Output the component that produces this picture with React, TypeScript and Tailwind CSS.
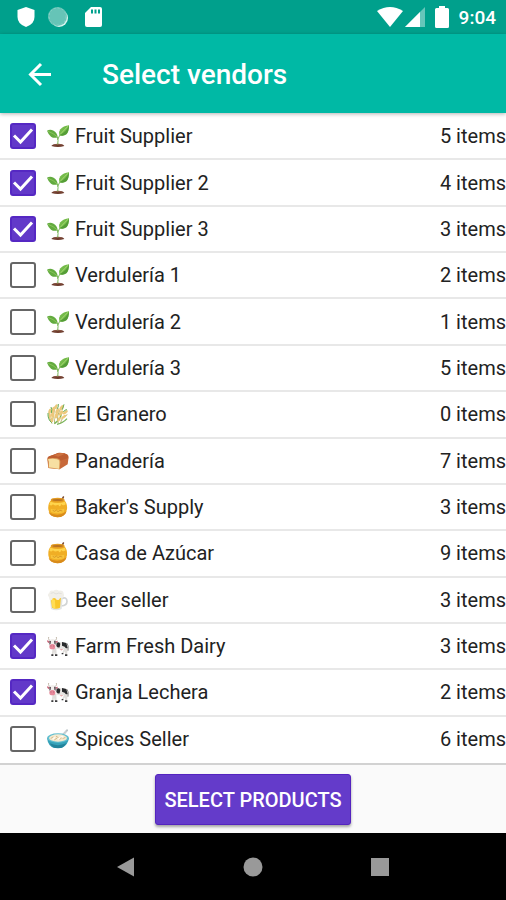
import React, { useState } from 'react';

type Kind = 'seedling' | 'grain' | 'bread' | 'honey' | 'beer' | 'cow' | 'bowl';

interface Vendor {
  id: number;
  name: string;
  kind: Kind;
  items: number;
}

const vendors: Vendor[] = [
  { id: 1, name: 'Fruit Supplier', kind: 'seedling', items: 5 },
  { id: 2, name: 'Fruit Supplier 2', kind: 'seedling', items: 4 },
  { id: 3, name: 'Fruit Supplier 3', kind: 'seedling', items: 3 },
  { id: 4, name: 'Verdulería 1', kind: 'seedling', items: 2 },
  { id: 5, name: 'Verdulería 2', kind: 'seedling', items: 1 },
  { id: 6, name: 'Verdulería 3', kind: 'seedling', items: 5 },
  { id: 7, name: 'El Granero', kind: 'grain', items: 0 },
  { id: 8, name: 'Panadería', kind: 'bread', items: 7 },
  { id: 9, name: "Baker's Supply", kind: 'honey', items: 3 },
  { id: 10, name: 'Casa de Azúcar', kind: 'honey', items: 9 },
  { id: 11, name: 'Beer seller', kind: 'beer', items: 3 },
  { id: 12, name: 'Farm Fresh Dairy', kind: 'cow', items: 3 },
  { id: 13, name: 'Granja Lechera', kind: 'cow', items: 2 },
  { id: 14, name: 'Spices Seller', kind: 'bowl', items: 6 },
];

const drawings: Record<Kind, React.ReactNode> = {
  seedling: (
    <>
      <path d="M13 63 Q18 56 33 56 Q48 56 52 63 Q33 69 13 63Z" fill="#6d3b2c" />
      <path d="M21 60 Q33 56 45 60" stroke="#9a6552" strokeWidth="2" fill="none" />
      <path d="M32 58 Q35 45 31 36 M32 44 Q35 32 46 24" stroke="#7bb85a" strokeWidth="3" fill="none" />
      <path d="M0 17 Q9 12 20 17 Q31 23 32 37 Q21 41 12 35 Q5 30 0 17Z" fill="#62ab3f" />
      <path d="M3 19 Q19 24 31 36" stroke="#9bcf66" strokeWidth="2" fill="none" />
      <path d="M66 1 Q66 20 58 28 Q49 35 37 31 Q33 22 40 13 Q49 3 66 1Z" fill="#74bb4a" />
      <path d="M63 4 Q52 14 39 29" stroke="#a6d871" strokeWidth="3" fill="none" />
      <path d="M37 31 Q49 35 58 28 Q66 20 66 1 Q60 20 37 31Z" fill="#559d37" />
    </>
  ),
  grain: (
    <>
      <path d="M15 62 Q4 45 8 24 M24 63 Q15 38 24 10 M34 62 Q26 40 43 14 M41 62 Q42 44 61 35" stroke="#b9b56d" strokeWidth="3" fill="none" />
      <path d="M22 62 Q40 50 44 30 M30 64 Q48 60 60 47" stroke="#79b45a" strokeWidth="4" fill="none" />
      <g fill="#ecc87c">
        <ellipse cx="8" cy="25" rx="4" ry="9" transform="rotate(15 8 25)" />
        <ellipse cx="8" cy="39" rx="4" ry="8" />
        <ellipse cx="19" cy="20" rx="5" ry="9" transform="rotate(15 19 20)" />
        <ellipse cx="17" cy="35" rx="5" ry="9" />
        <ellipse cx="27" cy="11" rx="4" ry="8" transform="rotate(25 27 11)" />
        <ellipse cx="31" cy="24" rx="5" ry="9" transform="rotate(25 31 24)" />
        <ellipse cx="28" cy="38" rx="5" ry="9" transform="rotate(15 28 38)" />
        <ellipse cx="44" cy="14" rx="5" ry="9" transform="rotate(35 44 14)" />
        <ellipse cx="42" cy="30" rx="5" ry="9" transform="rotate(35 42 30)" />
        <ellipse cx="55" cy="28" rx="4" ry="9" transform="rotate(55 55 28)" />
        <ellipse cx="50" cy="42" rx="4" ry="9" transform="rotate(55 50 42)" />
        <ellipse cx="15" cy="50" rx="4" ry="8" />
        <ellipse cx="36" cy="49" rx="4" ry="8" transform="rotate(30 36 49)" />
      </g>
      <path d="M34 3 Q35 13 30 18 M51 4 L46 20 M60 20 Q54 19 49 27 M3 30 Q2 50 14 59 M12 12 Q16 19 13 30" stroke="#68ad56" strokeWidth="3" fill="none" />
    </>
  ),
  bread: (
    <>
      <path d="M1 28 Q0 19 12 17 L33 9 Q51 8 60 13 Q67 17 64 28 L62 43 L38 58 L4 54Z" fill="#c8693a" />
      <path d="M2 25 Q5 17 18 15 L35 8 Q53 7 61 14 Q66 20 61 25 L39 32 Q25 24 2 25Z" fill="#bd5d30" />
      <path d="M20 16 L38 9 Q48 8 54 11 L34 20Z" fill="#cf7340" />
      <path d="M1 28 Q10 22 29 25 Q41 27 40 36 L38 58 L4 54 L4 35 Q1 33 1 28Z" fill="#dda05d" />
      <path d="M3 28 Q16 24 30 28 Q38 30 37 36 L36 56 L6 52 L6 34Z" fill="#f7dfa2" />
    </>
  ),
  honey: (
    <>
      <path d="M44 13 L49 3" stroke="#76442c" strokeWidth="5" strokeLinecap="round" />
      <path d="M13 12 Q2 22 4 40 Q6 61 31 64 Q56 63 60 40 Q62 22 51 12Z" fill="#f0ae25" />
      <path d="M5 48 Q31 66 59 46 Q53 64 31 64 Q9 63 5 48Z" fill="#d98b1b" />
      <ellipse cx="32" cy="12" rx="21" ry="7" fill="#e49c22" />
      <ellipse cx="32" cy="12" rx="16" ry="3" fill="#b97322" />
      <path d="M10 17 Q32 25 54 17 L56 25 Q48 31 43 24 Q39 36 34 26 Q22 31 18 25 Q14 31 7 26Z" fill="#ffd44c" />
      <path d="M11 38 Q31 44 52 38 L51 49 Q31 55 12 48Z" fill="#f8c33a" />
      <path d="M17 43 L23 46 L28 42 L33 47 L39 43 L46 45" stroke="#c98621" strokeWidth="2" fill="none" />
    </>
  ),
  beer: (
    <>
      <path d="M43 29 Q60 22 60 37 Q60 50 43 51" stroke="#d2d5d6" strokeWidth="5" fill="none" />
      <path d="M7 16 L48 16 L44 60 Q27 68 12 60Z" fill="#e2e5e4" />
      <path d="M11 25 L42 25 L39 56 Q27 62 15 56Z" fill="#f9c72c" />
      <path d="M13 28 L24 34 L25 58 Q20 59 16 55Z" fill="#ffdd55" />
      <path d="M6 24 Q-1 18 7 11 Q8 2 19 5 Q28 -1 36 5 Q49 3 50 14 Q54 24 45 27 Q39 25 36 32 Q28 35 25 28 Q17 25 14 33 Q7 36 7 28Z" fill="#f1efe9" />
      <path d="M11 13 Q20 8 27 15 Q35 10 44 14" stroke="#dad8d3" strokeWidth="2" fill="none" />
    </>
  ),
  cow: (
    <>
      <path d="M27 23 Q43 18 60 25 L63 40 Q62 46 55 43 L40 43 L29 42Z" fill="#e8e5e2" />
      <path d="M17 37 L28 39 L29 62 L24 62 L21 50 L19 62 L14 62Z M52 40 L62 39 L60 62 L55 62 L54 49 L48 57 L44 57Z" fill="#e1dedb" />
      <path d="M29 23 Q36 20 40 26 L38 37 Q32 39 28 33Z M45 21 L58 24 L62 39 Q57 42 53 35 L45 32Z" fill="#292a2c" />
      <path d="M60 25 Q66 32 63 47" stroke="#55514f" strokeWidth="2" fill="none" />
      <path d="M13 58 H19 V63 H13Z M24 58 H31 V63 H24Z M44 54 H49 V58 H44Z M54 58 H61 V63 H54Z" fill="#39393b" />
      <path d="M7 16 Q3 10 5 6 M26 16 Q30 11 28 6" stroke="#c2b8aa" strokeWidth="3" fill="none" />
      <path d="M0 16 L9 19 L8 25 Q0 24 0 16Z M33 17 L24 19 L25 25 Q33 24 33 17Z" fill="#c96b7d" />
      <path d="M8 15 Q16 9 25 15 L27 29 L21 42 H11 L5 29Z" fill="#f1eeec" />
      <path d="M7 17 L12 18 L11 26 L7 29Z M21 17 L26 17 L26 29 L22 26Z" fill="#615158" />
      <ellipse cx="16" cy="35" rx="9" ry="8" fill="#e8899b" />
      <path d="M11 33 H13 M19 33 H21" stroke="#87434e" strokeWidth="2" />
      <path d="M38 43 Q44 50 48 42Z" fill="#e7a1a5" />
    </>
  ),
  bowl: (
    <>
      <path d="M43 26 L60 7" stroke="#b4bdc1" strokeWidth="6" strokeLinecap="round" />
      <path d="M45 24 L59 8" stroke="#edf0f0" strokeWidth="2" />
      <path d="M0 30 Q3 54 21 60 L44 60 Q62 53 66 30Z" fill="#36a3ba" />
      <path d="M8 46 Q32 57 58 46 Q51 61 33 61 Q15 61 8 46Z" fill="#23839b" />
      <ellipse cx="33" cy="30" rx="33" ry="14" fill="#63bfd0" />
      <ellipse cx="33" cy="30" rx="27" ry="11" fill="#f4ead0" />
      <path d="M12 31 L18 27 M23 35 L29 31 M28 25 L34 29 M39 34 L44 29 M48 31 L54 29" stroke="#d5b98b" strokeWidth="3" strokeLinecap="round" />
      <path d="M18 33 L23 29 M34 33 L38 29 M42 25 L48 27" stroke="#fffaf0" strokeWidth="4" strokeLinecap="round" />
    </>
  ),
};

const StatusBar = () => (
  <div className="flex h-[34px] items-center justify-between bg-[#00a08c] pl-4 pr-2.5 text-white">
    <div className="flex items-center gap-3">
      <svg className="h-5 w-5" viewBox="0 0 20 20" fill="currentColor">
        <path d="M10 0 L18.500 3 V10 Q18.500 17 10 20 Q1.500 17 1.500 10 V3Z" />
      </svg>
      <svg className="h-5 w-5" viewBox="0 0 20 20">
        <circle cx="11" cy="11" r="9" fill="#d9f4ef" />
        <circle cx="9.500" cy="9.500" r="9.500" fill="#66c4b7" />
        <circle cx="9.500" cy="9.500" r="8.500" fill="none" stroke="#8bd2c8" strokeDasharray="2 2" />
      </svg>
      <svg className="ml-1 h-5 w-5" viewBox="0 0 20 20">
        <path d="M7 0 H16 Q18 0 18 2 V18 Q18 20 16 20 H3 Q1 20 1 18 V6Z" fill="#fff" />
        <path d="M7 2.500 h2 v4 h-2z M10.500 2.500 h2 v4 h-2z M14 2.500 h2 v4 h-2z" fill="#00a08c" />
      </svg>
    </div>
    <div className="flex items-center">
      <svg className="h-5 w-[26px]" viewBox="0 0 26 20" fill="currentColor">
        <path d="M0 4 Q13 -4 26 4 L13 20Z" />
      </svg>
      <svg className="ml-0.5 h-5 w-5" viewBox="0 0 20 20">
        <path d="M20 0 V20 H0Z" fill="#66c6ba" />
        <path d="M15 5 V20 H0Z" fill="#fff" />
      </svg>
      <svg className="ml-2.5 h-[22px] w-3.5" viewBox="0 0 14 22" fill="currentColor">
        <path d="M4 0 H10 V2 H12.500 Q14 2 14 3.500 V20.500 Q14 22 12.500 22 H1.500 Q0 22 0 20.500 V3.500 Q0 2 1.500 2 H4Z" />
      </svg>
      <span className="ml-2.5 pt-0.5 text-[19px] font-medium">9:04</span>
    </div>
  </div>
);

const VendorRow = ({ vendor, checked, onToggle }: { vendor: Vendor; checked: boolean; onToggle: () => void }) => (
  <li className="flex flex-1 border-b-2 border-[#e8e8e8] last:border-transparent">
    <label className="flex min-h-10 flex-1 items-center">
      <span className="ml-2.5 grid shrink-0 place-items-center">
        <input
          type="checkbox"
          checked={checked}
          onChange={onToggle}
          className="peer col-start-1 row-start-1 size-[26px] appearance-none rounded-[3px] border-2 border-[#666] bg-white checked:border-[#5528c3] checked:bg-[#6239c9]"
        />
        <svg className="pointer-events-none invisible col-start-1 row-start-1 size-[26px] peer-checked:visible" viewBox="0 0 26 26" fill="none">
          <path d="M4 12.500 L10.500 19 L22 6.500" stroke="#fff" strokeWidth="3" />
        </svg>
      </span>
      <svg className="ml-[11px] size-[22px] shrink-0" viewBox="0 0 66 66" aria-hidden="true">
        {drawings[vendor.kind]}
      </svg>
      <span className="ml-1.5 flex-1">{vendor.name}</span>
      <span>{vendor.items} items</span>
    </label>
  </li>
);

const App = () => {
  const [selected, setSelected] = useState<number[]>([1, 2, 3, 12, 13]);

  const toggle = (id: number) => {
    setSelected(selected.includes(id) ? selected.filter(s => s !== id) : [...selected, id]);
  };

  return (
    <div className="flex min-h-screen flex-col bg-white font-['Roboto',sans-serif] text-[#222]">
      <StatusBar />
      <header className="z-10 flex h-[79px] items-center bg-[#00b9a5] pl-[27px] pt-0.5 text-white shadow-[0_1px_4px_rgba(0,0,0,0.3)]">
        <button type="button" aria-label="Back">
          <svg className="size-[26px]" viewBox="0 0 26 26" fill="none" stroke="currentColor" strokeWidth="3">
            <path d="M24 12.500 H4 M14 2 L3.500 12.500 L14 23" />
          </svg>
        </button>
        <h1 className="ml-[49px] text-[28px] font-medium">Select vendors</h1>
      </header>

      <ul className="flex flex-1 flex-col pt-px text-xl">
        {vendors.map(vendor => (
          <VendorRow
            key={vendor.id}
            vendor={vendor}
            checked={selected.includes(vendor.id)}
            onToggle={() => toggle(vendor.id)}
          />
        ))}
      </ul>

      <div className="flex h-[70px] justify-center border-t-2 border-[#d2d2d2] bg-[#fafafa] pt-[9px]">
        <button
          type="button"
          className="h-[51px] rounded-[3px] border border-[#5424bf] bg-[#643bca] px-2 text-xl font-medium text-white shadow-[0_2px_3px_rgba(0,0,0,0.35)]"
        >
          SELECT PRODUCTS
        </button>
      </div>

      <nav className="flex h-[67px] items-center justify-center gap-[107px] bg-black text-[#999]">
        <button type="button" aria-label="Back">
          <svg className="size-5" viewBox="0 0 20 20" fill="currentColor">
            <path d="M1 10 L18 0.500 V19.500Z" />
          </svg>
        </button>
        <button type="button" aria-label="Home">
          <svg className="size-5" viewBox="0 0 20 20" fill="currentColor">
            <circle cx="10" cy="10" r="9.500" />
          </svg>
        </button>
        <button type="button" aria-label="Recent apps">
          <svg className="size-5" viewBox="0 0 20 20" fill="currentColor">
            <path d="M1 1 H19 V19 H1Z" />
          </svg>
        </button>
      </nav>
    </div>
  );
};

export default App;
